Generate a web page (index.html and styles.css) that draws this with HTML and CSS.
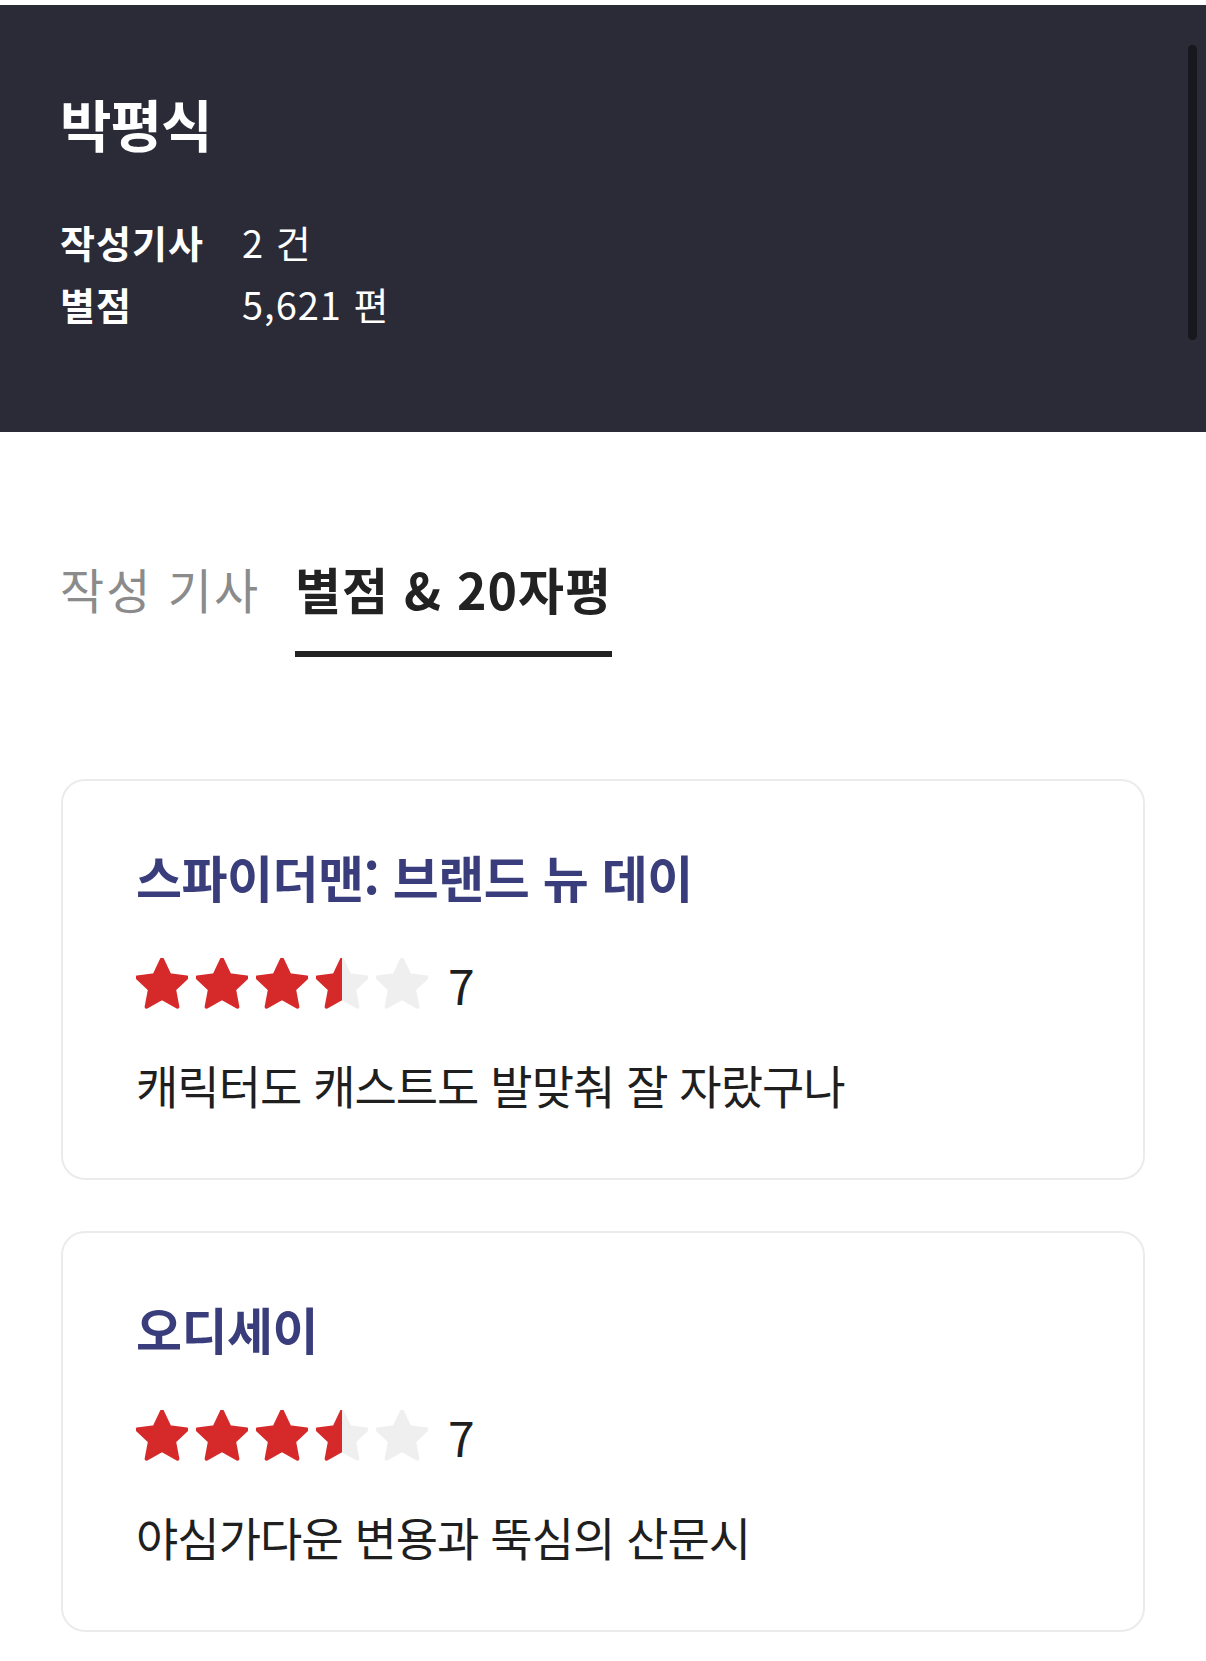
FILE: index.html
```html
<!DOCTYPE html>
<html lang="ko">
<head>
<meta charset="utf-8">
<title>박평식</title>
<link rel="stylesheet" href="styles.css">
</head>
<body>
<svg width="0" height="0" class="defs" aria-hidden="true">
  <defs>
    <linearGradient id="half" x1="0" y1="0" x2="1" y2="0">
      <stop offset="0.5" stop-color="#d6292a"/>
      <stop offset="0.5" stop-color="#efefef"/>
    </linearGradient>
    <path id="star" d="M12 2.6l2.85 6.05 6.55.85-4.8 4.55 1.25 6.55L12 17.35 6.15 20.6 7.4 14.05 2.6 9.5l6.55-.85z"/>
  </defs>
</svg>
<header class="profile">
  <h1 class="name">박평식</h1>
  <dl class="stats">
    <div class="stat"><dt>작성기사</dt><dd>2 건</dd></div>
    <div class="stat"><dt>별점</dt><dd>5,621 편</dd></div>
  </dl>
  <div class="scroll-thumb"></div>
</header>

<nav class="tabs">
  <span class="tab">작성 기사</span>
  <span class="tab active">별점 &amp; 20자평</span>
</nav>

<main class="list">
  <article class="card">
    <h2 class="title">스파이더맨: 브랜드 뉴 데이</h2>
    <div class="rating">
      <svg class="star full" viewBox="2.2 2.2 19.6 19.6"><use href="#star"/></svg>
      <svg class="star full" viewBox="2.2 2.2 19.6 19.6"><use href="#star"/></svg>
      <svg class="star full" viewBox="2.2 2.2 19.6 19.6"><use href="#star"/></svg>
      <svg class="star half" viewBox="2.2 2.2 19.6 19.6"><use href="#star"/></svg>
      <svg class="star empty" viewBox="2.2 2.2 19.6 19.6"><use href="#star"/></svg>
      <span class="score">7</span>
    </div>
    <p class="review">캐릭터도 캐스트도 발맞춰 잘 자랐구나</p>
  </article>
  <article class="card">
    <h2 class="title">오디세이</h2>
    <div class="rating">
      <svg class="star full" viewBox="2.2 2.2 19.6 19.6"><use href="#star"/></svg>
      <svg class="star full" viewBox="2.2 2.2 19.6 19.6"><use href="#star"/></svg>
      <svg class="star full" viewBox="2.2 2.2 19.6 19.6"><use href="#star"/></svg>
      <svg class="star half" viewBox="2.2 2.2 19.6 19.6"><use href="#star"/></svg>
      <svg class="star empty" viewBox="2.2 2.2 19.6 19.6"><use href="#star"/></svg>
      <span class="score">7</span>
    </div>
    <p class="review">야심가다운 변용과 뚝심의 산문시</p>
  </article>
</main>
</body>
</html>
```

FILE: styles.css
```css
* { box-sizing: border-box; }

html, body {
  margin: 0;
  padding: 0;
  background: #ffffff;
}

body {
  padding-top: 5px;
  font-family: "Noto Sans CJK KR", "Noto Sans", sans-serif;
  color: #1f1f1f;
}

.defs { position: absolute; width: 0; height: 0; }

.profile {
  position: relative;
  background: #2a2b37;
  color: #ffffff;
  height: 427px;
  padding: 86px 60px 0 60px;
}

.name {
  margin: 0;
  font-size: 56px;
  line-height: 64px;
  font-weight: 700;
  letter-spacing: -1px;
}

.stats {
  margin: 56px 0 0 0;
  padding: 0;
}

.stat {
  display: flex;
  height: 62px;
  align-items: center;
}

.stat dt {
  width: 182px;
  font-size: 38px;
  font-weight: 700;
  letter-spacing: 1px;
  line-height: 62px;
}

.stat dd {
  margin: 0;
  font-size: 38px;
  font-weight: 400;
  letter-spacing: 1px;
  line-height: 62px;
}

.scroll-thumb {
  position: absolute;
  top: 40px;
  right: 9px;
  width: 9px;
  height: 295px;
  border-radius: 5px;
  background: #17181e;
}

.tabs {
  display: flex;
  gap: 35px;
  margin-top: 126px;
  padding-left: 60px;
}

.tab {
  font-size: 48px;
  line-height: 60px;
  letter-spacing: 2px;
  color: #8b8b8b;
  padding-bottom: 33px;
  border-bottom: 6px solid transparent;
}

.tab.active {
  font-size: 50px;
  letter-spacing: 1px;
  color: #222222;
  font-weight: 700;
  border-bottom-color: #222222;
}

.list {
  display: flex;
  flex-direction: column;
  gap: 51px;
  margin: 122px 61px 0 61px;
}

.card {
  border: 2px solid #ebebed;
  border-radius: 24px;
  padding: 67px 73px 65px 73px;
}

.title {
  margin: 0;
  font-size: 50px;
  line-height: 56px;
  font-weight: 700;
  color: #3a3d7b;
  letter-spacing: -0.5px;
}

.rating {
  display: flex;
  align-items: center;
  gap: 8px;
  height: 52px;
  margin-top: 54px;
}

.star {
  width: 52px;
  height: 52px;
  flex: none;
}

.star use {
  stroke-width: 1.4;
  stroke-linejoin: round;
}

.star.full use { fill: #d6292a; stroke: #d6292a; }
.star.half use { fill: url(#half); stroke: url(#half); }
.star.empty use { fill: #efefef; stroke: #efefef; }

.score {
  margin-left: 12px;
  font-size: 48px;
  line-height: 50px;
  font-weight: 400;
  color: #1f1f1f;
}

.review {
  margin: 45px 0 0 0;
  font-size: 46px;
  line-height: 58px;
  letter-spacing: -1px;
  color: #1f1f1f;
}
```
